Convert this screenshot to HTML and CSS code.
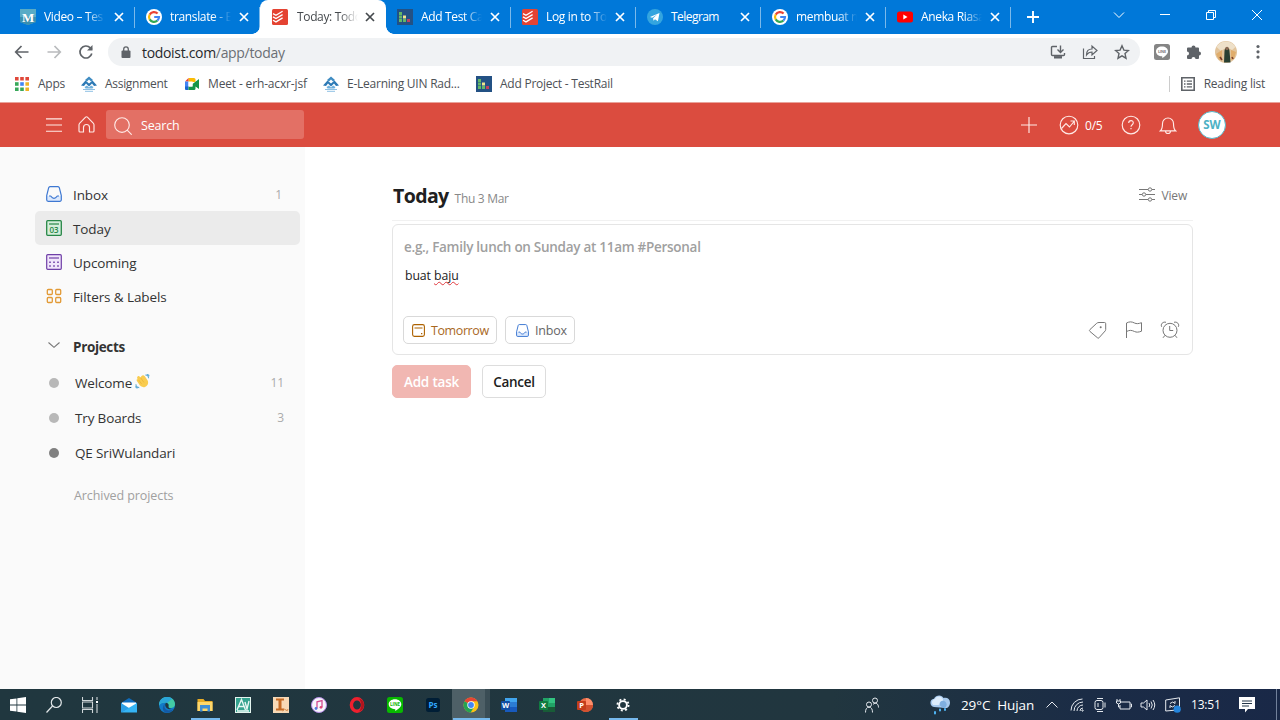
FILE: index.html
```html
<!DOCTYPE html>
<html lang="en">
<head>
<meta charset="utf-8">
<title>Today: Todoist</title>
<link rel="stylesheet" href="styles.css">
</head>
<body>
<svg class="defs" aria-hidden="true">
  <symbol id="google" viewBox="0 0 16 16"><circle cx="8" cy="8" r="8" fill="#fff"/><g fill="none" stroke-width="2.2"><path d="M11.6 4.6A5 5 0 0 0 3.7 5.6" stroke="#ea4335"/><path d="M3.7 5.5a5 5 0 0 0 0 5" stroke="#fbbc05"/><path d="M3.7 10.4a5 5 0 0 0 7.6 1.3" stroke="#34a853"/><path d="M11.3 11.7A5 5 0 0 0 13 8H8.2" stroke="#4285f4"/></g></symbol>
  <symbol id="todoist" viewBox="0 0 16 16"><rect width="16" height="16" rx="1.5" fill="#e44332"/><path d="M1 4.600l3 1.700 6.600-4M1 7.900l3 1.700 6.600-4M1 11.200l3 1.700 6.600-4" fill="none" stroke="#fff" stroke-width="1.300"/></symbol>
  <symbol id="testrail" viewBox="0 0 16 16"><rect width="16" height="16" fill="#235184"/><path d="M2 3h3v3H2zM2 6.500h3v3H2zM2 10h3v3H2zM6 10h3v3H6z" fill="#63b868"/><path d="M6 6.500h3v3H6z" fill="#f0e68c"/><path d="M10 10h3v3h-3z" fill="#c0435e"/></symbol>
  <symbol id="close" viewBox="0 0 10 10"><path d="M1 1l8 8M9 1L1 9" fill="none" stroke="currentColor" stroke-width="1.700"/></symbol>
  <symbol id="uin" viewBox="0 0 16 16"><path d="M8 .5L12 4l-2 1.500L8 3.500l-2 2L4 4z" fill="#3f8cc2"/><path d="M0 9.500L4.500 4.500 8 7.500l3.500-3L16 9.500l-3 .5-2-2.500L8 10.500 5 7.500 3 10z" fill="#2c79b5"/><path d="M3.500 11L6 9.500l2 2 2-2 2.500 1.500-1 1.500h-7z" fill="#6fb0dc"/><path d="M2 13.500h12M4 15.300h8" stroke="#8ec0e4" stroke-width="1"/></symbol>
  <symbol id="inbox" viewBox="0 0 16 16"><path d="M.7 10h4c.5 0 .7 2.300 3.300 2.300S10.800 10 11.300 10h4v5.300H.7z" fill="#dce9fd"/><path d="M4 .7h8a1.500 1.500 0 0 1 1.300 1l2 8v4.100a1.500 1.500 0 0 1-1.500 1.500H2.200a1.500 1.500 0 0 1-1.500-1.500V9.700l2-8A1.500 1.500 0 0 1 4 .7zM3 10h1.700c.5 0 .7 2.300 3.300 2.300S10.800 10 11.300 10H13" fill="none" stroke="currentColor" stroke-width="1.200" stroke-linejoin="round"/></symbol>
</svg>

<div class="tabs">
  <div class="tab"><svg class="fav" viewBox="0 0 16 16"><path d="M0 0h16v13l-8 3-8-3z" fill="#58abc6"/><path d="M0 8h16v5l-8 3-8-3z" fill="#398fb0"/><text x="8" y="12.500" text-anchor="middle" class="favtext">M</text></svg><span class="title">Video – Tes</span><svg class="x"><use href="#close"/></svg></div>
  <div class="tab"><svg class="fav"><use href="#google"/></svg><span class="title">translate - E</span><svg class="x"><use href="#close"/></svg></div>
  <div class="tab active"><svg class="fav"><use href="#todoist"/></svg><span class="title">Today: Todo</span><svg class="x"><use href="#close"/></svg></div>
  <div class="tab"><svg class="fav"><use href="#testrail"/></svg><span class="title">Add Test Ca</span><svg class="x"><use href="#close"/></svg></div>
  <div class="tab"><svg class="fav"><use href="#todoist"/></svg><span class="title">Log in to To</span><svg class="x"><use href="#close"/></svg></div>
  <div class="tab"><svg class="fav" viewBox="0 0 16 16"><circle cx="8" cy="8" r="8" fill="#34a5df"/><path d="M3 7.900l9.500-3.900-1.600 8.300-2.900-2-1.500 1.500-.4-2.600 4-3.600-5 3.100z" fill="#fff"/></svg><span class="title whole">Telegram</span><svg class="x"><use href="#close"/></svg></div>
  <div class="tab"><svg class="fav"><use href="#google"/></svg><span class="title">membuat n</span><svg class="x"><use href="#close"/></svg></div>
  <div class="tab"><svg class="fav" viewBox="0 0 16 16"><rect y="2.500" width="16" height="11" rx="2.500" fill="#f00"/><path d="M6.300 5.500v5L10.500 8z" fill="#fff"/></svg><span class="title">Aneka Riasa</span><svg class="x"><use href="#close"/></svg></div>
  <svg class="plus" viewBox="0 0 12 12"><path d="M6 0v12M0 6h12" stroke="#fff" stroke-width="1.900"/></svg>
  <div class="winctl">
    <svg width="12" height="12" viewBox="0 0 12 12"><path d="M1 3.500l5 5 5-5"/></svg>
    <svg width="12" height="12" viewBox="0 0 12 12"><path d="M1 5.500h10"/></svg>
    <svg width="12" height="12" viewBox="0 0 12 12"><path d="M1.500 3.500h7v7h-7zM3.500 3.500v-2h7v7h-2"/></svg>
    <svg width="12" height="12" viewBox="0 0 12 12"><path d="M1 1l10 10M11 1L1 11"/></svg>
  </div>
</div>

<div class="toolbar">
  <svg class="nav" viewBox="0 0 16 16"><path d="M14.500 8H2M7.500 2L1.700 8l5.800 6"/></svg>
  <svg class="nav off" viewBox="0 0 16 16"><path d="M1.500 8H14M8.500 2l5.800 6-5.800 6"/></svg>
  <svg class="nav" viewBox="0 0 16 16"><path d="M13.800 9.500A6 6 0 1 1 12.300 3.800L14 5.500"/><path d="M14.500 1v5.500H9z" fill="#5f6368" stroke="none"/></svg>
  <div class="address">
    <svg class="lock" viewBox="0 0 10 12"><rect x=".5" y="4.500" width="9" height="7.500" rx="1" fill="#5f6368"/><path d="M2.700 5V3.200a2.300 2.300 0 0 1 4.600 0V5" fill="none" stroke="#5f6368" stroke-width="1.300"/></svg>
    <span class="url">todoist.com<i>/app/today</i></span>
    <svg class="act" viewBox="0 0 16 16"><path d="M7 2.500H2.500a1 1 0 0 0-1 1v7a1 1 0 0 0 1 1h11a1 1 0 0 0 1-1V9M10.500 1.500v6.500M7.500 5.500l3 3 3-3" stroke-width="1.400"/><path d="M4 13.300h8" stroke-width="2.400"/></svg>
    <svg class="act" viewBox="0 0 16 16"><path d="M1.500 4.500v10h11V12M4.500 11c0-4 2-6 5.500-6V2l5 4.500-5 4.500V8c-2.500 0-4 .7-5.500 3z" stroke-width="1.200"/></svg>
    <svg class="act" viewBox="0 0 16 16"><path d="M8 1.800l1.900 4.300 4.600.4-3.500 3.100 1 4.600L8 11.800l-4 2.400 1-4.600-3.500-3.100 4.600-.4z" stroke-width="1.400"/></svg>
  </div>
  <svg class="ext line" viewBox="0 0 16 16"><rect width="16" height="16" rx="2.500" fill="#858585"/><path d="M8 2.500c3.500 0 6 2.100 6 4.900 0 2.500-3 4.800-5.800 6.600v-1.800C4.700 12.200 2 10 2 7.400c0-2.800 2.500-4.900 6-4.900z" fill="#fff"/><text x="8" y="9" text-anchor="middle" class="linetext">LINE</text></svg>
  <svg class="ext" viewBox="0 0 16 16"><path d="M1 4.500A1 1 0 0 1 2 3.500h3.500a2 2 0 1 1 4 0H12a1 1 0 0 1 1 1V7.500a2 2 0 1 1 0 4V14a1 1 0 0 1-1 1H9.500a2 2 0 1 0-4 0H2a1 1 0 0 1-1-1v-2.500a2 2 0 1 0 0-4z" fill="#5f6368"/></svg>
  <svg class="photo" viewBox="0 0 22 22"><circle cx="11" cy="11" r="11" fill="#e2c49c"/><path d="M1.500 6a11 11 0 0 1 19 0L17 9l-5-3-6 4z" fill="#eee0c9"/><path d="M1 13l6-4v10l-3 0zM16 9l5 2-2 7-3 1z" fill="#e0ad6c"/><path d="M9.500 10a2.500 3 0 0 1 5 0l1 11.500H9z" fill="#293f32"/><circle cx="12" cy="7.500" r="1.800" fill="#8a6a55"/><path d="M5 16l2 3M17 16l1 2" stroke="#773e2c" stroke-width="1.600"/></svg>
  <svg class="dots" viewBox="0 0 4 16"><circle cx="2" cy="2.500" r="1.600"/><circle cx="2" cy="7.800" r="1.600"/><circle cx="2" cy="13.100" r="1.600"/></svg>
</div>

<div class="bookmarks">
  <svg class="bm" viewBox="0 0 14 14"><path d="M0 0h3.600v3.600H0zM5.200 0h3.600v3.600H5.200zM10.400 0H14v3.600h-3.600z" fill="#e0483a"/><path d="M0 5.200h3.600v3.600H0z" fill="#39a85a"/><path d="M5.200 5.200h3.600v3.600H5.200z" fill="#4285f4"/><path d="M0 10.400h3.600V14H0zM5.200 10.400h3.600V14H5.200z" fill="#39a85a"/><path d="M10.400 5.200H14v3.600h-3.600zM10.400 10.400H14V14h-3.600z" fill="#f0b326"/></svg><span class="b1">Apps</span>
  <svg class="bm16"><use href="#uin"/></svg><span class="b2">Assignment</span>
  <svg class="bm16" viewBox="0 0 16 16"><path d="M4.500 2H10a1.500 1.500 0 0 1 1.500 1.500V6H4.500z" fill="#fbbc04"/><path d="M4.500 2v3.500H1z" fill="#ea4335"/><path d="M1 5.500h3.500V11H1z" fill="#4285f4"/><path d="M1 10.500h3.500V14H2a1 1 0 0 1-1-1z" fill="#1967d2"/><path d="M4.500 10.500h4V8L15 3v10l-3.500-2.500V12.500A1.500 1.500 0 0 1 10 14H4.500z" fill="#159447"/><path d="M4.500 5.500h4v5h-4z" fill="#fff"/></svg><span class="b3">Meet - erh-acxr-jsf</span>
  <svg class="bm16"><use href="#uin"/></svg><span class="b4">E-Learning UIN Rad...</span>
  <svg class="bm16"><use href="#testrail"/></svg><span class="b5">Add Project - TestRail</span>
  <div class="reading"><svg viewBox="0 0 14 14"><path d="M.8.8h12.400v12.400H.8z" fill="none" stroke="#5f6368" stroke-width="1.600"/><path d="M3 4.200h1.500M5.800 4.200H11M3 7h1.500M5.800 7H11M3 9.800h1.500M5.800 9.800H11" stroke="#5f6368" stroke-width="1.300"/></svg><span>Reading list</span></div>
</div>

<header class="topbar">
  <svg class="burger" viewBox="0 0 16 14"><path d="M0 .8h16M0 7h16M0 13.200h16"/></svg>
  <svg class="home" viewBox="0 0 17 17"><path d="M2 6.800L7.600 1.200a1.300 1.300 0 0 1 1.800 0L15 6.800q1 1 1 2V15a1 1 0 0 1-1 1h-3.500v-4.500a3 3 0 0 0-6 0V16H2a1 1 0 0 1-1-1V8.800q0-1 1-2z"/></svg>
  <div class="search"><svg viewBox="0 0 18 18"><circle cx="8" cy="8" r="7.300"/><path d="M13.200 13.200l4.500 4.500"/></svg><span>Search</span></div>
  <svg class="add" viewBox="0 0 16 16"><path d="M8 0v16M0 8h16"/></svg>
  <svg class="karma" viewBox="0 0 20 20"><circle cx="10" cy="10" r="8.800"/><path d="M2.500 13.500L7 8.500l3.500 3.500L15 6.500M11.500 6H15.300V10"/></svg>
  <span class="score">0/5</span>
  <svg class="help" viewBox="0 0 20 20"><circle cx="10" cy="10" r="8.800"/><path d="M7.700 8c0-3.200 4.600-3.100 4.600-.2 0 1.900-2.300 1.900-2.300 3.900M10 13v1.300"/></svg>
  <svg class="bell" viewBox="0 0 18 20"><path d="M1.500 15.800c1.700-1.500 2-3 2-7.300a5.500 5.500 0 0 1 11 0c0 4.300.3 5.800 2 7.300zM6.500 16a2.500 2.500 0 0 0 5 0"/></svg>
  <div class="avatar">SW</div>
</header>

<main class="app">
  <aside class="side">
    <div class="item"><svg class="blue"><use href="#inbox"/></svg><span>Inbox</span><em>1</em></div>
    <div class="item selected"><svg viewBox="0 0 16 16"><rect x=".7" y=".7" width="14.600" height="14.600" rx="1" fill="#d5eedb" stroke="#278747" stroke-width="1.300"/><path d="M3 4h10" stroke="#278747" stroke-width="1.200"/><text x="8" y="13" text-anchor="middle" class="date">03</text></svg><span>Today</span></div>
    <div class="item"><svg viewBox="0 0 16 16"><rect x=".7" y=".7" width="14.600" height="14.600" rx="1" fill="#f1e5fb" stroke="#6f3fa7" stroke-width="1.200"/><path d="M3 4h10" stroke="#6f3fa7" stroke-width="1.200"/><path d="M3.200 8.200h10M3.200 12h10" stroke="#6f3fa7" stroke-width="1.600" stroke-dasharray="1.600 2.400"/></svg><span>Upcoming</span></div>
    <div class="item"><svg viewBox="0 0 16 16" fill="none" stroke="#e29a36" stroke-width="1.300"><rect x="1.300" y="1.500" width="5" height="5" rx="1"/><rect x="9.700" y="1.500" width="5" height="5" rx="1"/><rect x="1.300" y="9.500" width="5" height="5" rx="1"/><rect x="9.700" y="9.500" width="5" height="5" rx="1"/></svg><span>Filters &amp; Labels</span></div>
    <div class="heading"><svg viewBox="0 0 12 6"><path d="M.5.5L6 5.300 11.500.5" fill="none" stroke="#777" stroke-width="1.100"/></svg><span>Projects</span></div>
    <div class="project"><b class="dot"></b><span>Welcome</span><svg class="wave" viewBox="0 0 16 16"><path d="M3 2.500c1-1 2 .3 3 1.300C6.500 1.500 9 0 10.500 2.500l3 4.500c1.500 3-.5 6.500-3.500 7-2.500.4-4.500-1-6-3.500L2 7.500C1.300 6 2 5.500 3 5.800 2 4.500 2 3.500 3 2.500z" fill="#f9cc4f"/><path d="M6 4l3.500 5M4 6.500L7 10.500" stroke="#e8ad36" stroke-width=".7"/><path d="M11 1c2.500 0 3.500 1 3.500 3.500M12.500.5c2 0 2.500.5 2.500 2M1 11c0 2.500 1 3.500 3.500 3.500M.7 13c0 1.500.7 2 2 2" fill="none" stroke="#67aed6" stroke-width="1.200"/></svg><em>11</em></div>
    <div class="project"><b class="dot"></b><span>Try Boards</span><em>3</em></div>
    <div class="project"><b class="dot dark"></b><span>QE SriWulandari</span></div>
    <div class="archived">Archived projects</div>
  </aside>
  <section class="content">
    <div class="head"><h1>Today</h1><small>Thu 3 Mar</small><div class="view"><svg viewBox="0 0 16 15"><path d="M0 2.500h9M13 2.500h3M0 7.500h3M7 7.500h9M0 12.500h9M13 12.500h3"/><circle cx="11" cy="2.500" r="1.700"/><circle cx="5" cy="7.500" r="1.700"/><circle cx="11" cy="12.500" r="1.700"/></svg><span>View</span></div></div>
    <div class="editor">
      <div class="ph">e.g., Family lunch on Sunday at 11am #Personal</div>
      <div class="desc">buat <u>baju</u></div>
      <div class="chips">
        <div class="chip tomorrow"><svg viewBox="0 0 13 13"><rect x=".6" y=".6" width="11.800" height="11.800" rx="1.800" fill="none" stroke="#ad6200" stroke-width="1.100"/><path d="M2.500 4h8" stroke="#ad6200"/><path d="M9 9h1.300v1.300H9z" fill="#ad6200"/></svg><span>Tomorrow</span></div>
        <div class="chip inboxchip"><svg class="blue"><use href="#inbox"/></svg><span>Inbox</span></div>
        <div class="tools">
          <svg viewBox="0 0 20 20"><path d="M11 2.500h5.500a1.200 1.200 0 0 1 1.200 1.200V9.500q0 .8-.6 1.500L11 17.800a1 1 0 0 1-1.500 0L2 11.500a1.300 1.300 0 0 1 0-2l6.700-6.200q.8-.8 2.300-.8z"/><circle cx="12.700" cy="7.300" r="1" fill="#777" stroke="none"/></svg>
          <svg viewBox="0 0 20 20"><path d="M2.500 18V3c3-1.500 5-1.500 8 0 2 1 4 .8 7-.3v8.500c-3 1.100-5 1.300-7 .3-3-1.500-5-1.500-8 0"/></svg>
          <svg viewBox="0 0 20 20"><circle cx="10" cy="10.300" r="7"/><path d="M9.700 6v4.500h3.500M5 15.300l-2 2.500M15 15.300l2 2.500M1.700 6.800C.2 4.200 3 1.300 6 2.300M18.300 6.800C19.800 4.200 17 1.300 14 2.300"/></svg>
        </div>
      </div>
    </div>
    <div class="buttons"><div class="btn primary">Add task</div><div class="btn">Cancel</div></div>
  </section>
</main>

<footer class="taskbar">
  <div class="cell s"><svg viewBox="0 0 16 16"><path d="M0 2.300l6.500-.9v6.200H0zM7.300 1.300L16 0v7.600H7.300zM0 8.400h6.500v6.200L0 13.700zM7.300 8.400H16V16l-8.700-1.300z" fill="#fff"/></svg></div>
  <div class="cell s"><svg viewBox="0 0 16 16" fill="none" stroke="#e3e8ea" stroke-width="1.200"><circle cx="10.300" cy="5.500" r="5"/><path d="M6.500 9L.5 15.500"/></svg></div>
  <div class="cell s last"><svg viewBox="0 0 16 16"><path d="M.5 0v3.500h10V0M.5 16v-3.500h10V16M.5 5v6h10V5zM15 0v3M15 7v9" fill="none" stroke="#cfd6d8" stroke-width="1.100"/><path d="M14 4h2v2h-2z" fill="#fff"/></svg></div>
  <div class="cell"><svg viewBox="0 0 16 16"><path d="M0 6l8-5 8 5v9H0z" fill="#0f6cbd"/><path d="M1 5.500h14V11H1z" fill="#fff"/><path d="M0 6l8 5-8 4.500z" fill="#2d9fe5"/><path d="M16 6l-16 9.500h16z" fill="#35b4f4"/></svg></div>
  <div class="cell"><svg viewBox="0 0 16 16"><circle cx="8" cy="8" r="8" fill="#117bc8"/><path d="M.2 6.500C1 2.500 4 0 8 0c5 0 8 3.500 8 7 0 3-2 4-4.500 4-2 0-2.500-1-2-2 .8-2-1-3.500-3.500-3.500-3 0-5 1-5.800 3z" fill="#43cba4"/><path d="M.2 6.500C1 2.500 4 0 8 0c2 0 4 .6 5.300 1.800L8 6q-1-.6-2-.5c-3 0-5 1-5.800 3z" fill="#2aa5d8"/><path d="M6 6.500c-2 4 1 7.500 5 6.800 1.500-.2 2.500-.8 3.500-1.500C13 15 10 16 7.500 15.800 3 15 3 9 6 6.500z" fill="#1459a4"/><path d="M9.500 9c.5-1.500-.5-3-2.500-3.300C5 8 7 12 11 12.300l3-.8c-2.500.5-5 0-4.500-2.500z" fill="#203740"/></svg></div>
  <div class="cell run"><svg viewBox="0 0 16 16"><path d="M.5 2h6l1.500 2h7.500v10H.5z" fill="#e8ac26"/><path d="M.5 5h15v9H.5z" fill="#fed76b"/><path d="M3 8h10v6.500h-2.500v-3h-5v3H3z" fill="#3f8ed5"/></svg></div>
  <div class="cell"><svg viewBox="0 0 16 16"><path d="M0 0h16v16H0z" fill="#e4f4ef"/><path d="M1 1h14v14H1z" fill="#34a38f"/><path d="M2 13L6.500 2.500l4 10.500M3.500 9.500h6M10 5l2 7 2-8M2 14h12" fill="none" stroke="#e8f7f4" stroke-width="1.400"/></svg></div>
  <div class="cell"><svg viewBox="0 0 16 16"><path d="M0 0h16v16H0z" fill="#f8d9b5"/><path d="M3 1.500h8v2H8.500v8H11v2H3v-2h2.500v-8H3z" fill="#c66b24"/><path d="M9.500 14q2-3 3.500-1t2-1" fill="none" stroke="#d58a48"/></svg></div>
  <div class="cell"><svg viewBox="0 0 16 16"><circle cx="8" cy="8" r="7.500" fill="#f7f6fc" stroke="#b98fe8"/><path d="M6 11.500V4.800l5-1.200v6.500" fill="none" stroke="#d44b91" stroke-width="1.300"/><circle cx="5" cy="11.500" r="1.400" fill="#5379dc"/><circle cx="10" cy="10.300" r="1.400" fill="#e14775"/></svg></div>
  <div class="cell"><svg viewBox="0 0 16 16"><ellipse cx="8" cy="8" rx="5.600" ry="6.200" fill="none" stroke="#ef202e" stroke-width="3.400"/><path d="M10 1.500c3 1 5 3 5 6.500s-2 5.500-5 6.500c3-4 3-9 0-13z" fill="#ad151d"/></svg></div>
  <div class="cell"><svg viewBox="0 0 16 16"><rect width="16" height="16" rx="2.500" fill="#08b900"/><path d="M8 2.300c3.600 0 6.300 2.200 6.300 5 0 2.700-3 4.900-6 6.700v-1.800c-3.800-.2-6.600-2.200-6.600-4.900 0-2.800 2.700-5 6.300-5z" fill="#fff"/><text x="8" y="9" text-anchor="middle" class="linetext green">LINE</text></svg></div>
  <div class="cell"><svg viewBox="0 0 16 16"><rect x="1" y="1" width="14" height="14" rx="2.500" fill="#001e36"/><text x="8" y="10.700" text-anchor="middle" class="ps">Ps</text></svg></div>
  <div class="cell chrome"><svg viewBox="0 0 16 16"><circle cx="8" cy="8" r="7.500" fill="#fbc116"/><path d="M8 8L1.500 4.200A7.500 7.500 0 0 1 14.500 4.300H8z" fill="#e74435"/><path d="M8 8L1.500 4.200A7.500 7.500 0 0 0 7.700 15.500L11 10z" fill="#24a353"/><circle cx="8" cy="8" r="3.700" fill="#fff"/><circle cx="8" cy="8" r="2.900" fill="#4285f4"/></svg></div>
  <div class="cell"><svg viewBox="0 0 16 16"><path d="M4 1h12v14H4z" fill="#2b7cd3"/><path d="M4 1h12v4H4z" fill="#41a5ee"/><path d="M4 10h12v5H4z" fill="#185abd"/><rect y="4" width="9" height="9" rx="1" fill="#114ea4"/><text x="4.500" y="11" text-anchor="middle" class="office">W</text></svg></div>
  <div class="cell"><svg viewBox="0 0 16 16"><path d="M4 1h12v14H4z" fill="#21a366"/><path d="M10 1h6v5h-6z" fill="#33c481"/><path d="M4 10h12v5H4z" fill="#185c37"/><rect y="4" width="9" height="9" rx="1" fill="#107c41"/><text x="4.500" y="11" text-anchor="middle" class="office">X</text></svg></div>
  <div class="cell"><svg viewBox="0 0 16 16"><circle cx="9" cy="8" r="7" fill="#ed6c47"/><path d="M9 1a7 7 0 0 1 7 7H9z" fill="#ff8f6b"/><path d="M3 11.500A7 7 0 0 0 16 8H9z" fill="#d35230"/><rect y="4" width="9" height="9" rx="1" fill="#c43e1c"/><text x="4.500" y="11" text-anchor="middle" class="office">P</text></svg></div>
  <div class="cell run"><svg viewBox="0 0 16 16"><circle cx="8" cy="8" r="3.900" fill="none" stroke="#fff" stroke-width="1.900"/><circle cx="8" cy="8" r="5.600" fill="none" stroke="#fff" stroke-width="1.800" stroke-dasharray="2 2.398"/></svg></div>
  <div class="tray">
    <svg class="people" viewBox="0 0 16 16"><circle cx="5" cy="7.500" r="2.500"/><path d="M1.500 15.500c0-3.200 1-5.300 3.500-5.300s3.500 2 3.500 5.300"/><circle cx="11" cy="3.500" r="2.500"/><path d="M9 7.300c3-2.300 5.500-.5 5.500 3.200"/></svg>
    <svg class="rain" viewBox="0 0 22 20"><path d="M5 12a4.200 4.200 0 0 1 0-8.300C7-.5 13-.5 14.500 3 18 2 21 4 21 7.500S19 13 17 13z" fill="#a7c9ed"/><path d="M4 10a3.500 3.500 0 0 1 2-6c2-3.500 7-3 8 .5 1 3-2 5-5 5.500z" fill="#dcecfb"/><path d="M11 10.500c-2-4 4-6.500 6-3s-1 5.500-3 5.500z" fill="#7fafe0"/><path d="M6 17v1.500M11 14.500v1M16 14v1" stroke="#4fb4f3" stroke-width="2" stroke-linecap="round"/></svg>
    <span class="temp">29°C&nbsp; Hujan</span>
    <svg class="up" viewBox="0 0 12 12"><path d="M.5 8.500L6 3l5.500 5.500"/></svg>
    <svg class="wifi" viewBox="0 0 14 14"><path d="M1 12.500A11.500 11.500 0 0 1 12.500 1M4 13A9 9 0 0 1 13 4M7 13A6 6 0 0 1 13 7M10 13a3 3 0 0 1 3-3"/><circle cx="12.500" cy="12.500" r=".7"/></svg>
    <svg class="cam" viewBox="0 0 14 14"><rect x="2" y="2.500" width="8" height="9" rx="2"/><path d="M4 .5h6M4 13.500h6M12 4.500v5M5 5v4"/></svg>
    <svg class="bat" viewBox="0 0 16 14"><path d="M5 4h9v7H4V7M14.500 6h1v3h-1M1 1v2M4 1v2M.5 3h4v2q-2 2-4 0zM2.500 6v3H4"/></svg>
    <svg class="spk" viewBox="0 0 16 14"><path d="M1 5h2.500L7 2v10L3.500 9H1zM9 5q1.500 2 0 4M11 3.500q2.500 3.500 0 7M13 2q3.500 5 0 10"/></svg>
    <svg class="sync" viewBox="0 0 16 16"><path d="M.7 3L14.500.8v12L.7 14zM5 6.500q3-3 5 0V4M10 8.500q-3 3-5 0V11"/><circle cx="12.200" cy="12.200" r="3.600" fill="#2485dd" stroke="none"/></svg>
    <span class="clock">13:51</span>
    <svg class="note" viewBox="0 0 16 16"><path d="M0 0h16v12H9l-3 3.500V12H0z" fill="#fff" stroke="none"/><path d="M3 4h10M3 6.500h10M3 9h7" stroke="#243649"/></svg>
  </div>
</footer>
</body>
</html>
```

FILE: styles.css
```css
* { box-sizing: border-box; }
body { margin: 0; width: 1280px; height: 720px; overflow: hidden; display: flex; flex-direction: column; background: #fff; color: #333; font-family: "Open Sans", "Noto Sans", sans-serif; font-size: 13.500px; letter-spacing: -.1px; }
svg { display: block; flex: none; }
span { white-space: nowrap; }
.defs { position: absolute; width: 0; height: 0; }

/* browser tabs */
.tabs { height: 34px; flex: none; display: flex; background: #0078d9; padding-left: 10px; }
.tab { width: 125px; height: 34px; flex: none; display: flex; align-items: center; padding-left: 11px; color: #fff; border-right: 1px solid #66aee8; border-image: linear-gradient(transparent 23%, #7bb9ea 23%, #7bb9ea 80%, transparent 80%) 1; }
.tab:first-child { padding-left: 10px; }
.tab:first-child .x { margin-left: 9px; }
.fav { width: 16px; height: 16px; }
.title { width: 61px; margin-left: 8px; font-size: 12px; letter-spacing: -.35px; line-height: 20px; mask-image: linear-gradient(90deg, #000 70%, transparent); }
.title.whole { mask-image: none; letter-spacing: -.55px; }
.x { width: 10px; height: 10px; margin-left: 8px; }
.active { position: relative; background: #fff; color: #45494d; border: 0; border-radius: 8px 8px 0 0; width: 126px; padding-left: 12px; }
.active::before, .active::after { content: ""; position: absolute; bottom: 0; width: 8px; height: 8px; }
.active::before { left: -8px; background: radial-gradient(circle at 0 0, transparent 7.500px, #fff 8px); }
.active::after { right: -8px; background: radial-gradient(circle at 100% 0, transparent 7.500px, #fff 8px); }
.active .title { margin-left: 9px; }
.active .x { margin-left: 7px; }
.plus { width: 12px; height: 12px; margin: 11px 0 0 16px; }
.winctl { margin: 9px 17px 0 auto; display: flex; gap: 34px; fill: none; stroke: #fff; stroke-width: 1; }
.favtext { font: bold 13px "Liberation Serif", serif; fill: #fff; }

/* navigation */
.toolbar { height: 36px; flex: none; display: flex; align-items: center; padding-left: 14px; }
.nav { width: 16px; height: 16px; margin-right: 16px; fill: none; stroke: #5f6368; stroke-width: 1.700; }
.nav.off { stroke: #b9bbbd; }
.address { width: 1032px; height: 28px; margin-left: -2px; border-radius: 14px; background: #f0f2f4; display: flex; align-items: center; padding-left: 13px; }
.lock { width: 10px; height: 12px; }
.url { font-size: 14px; letter-spacing: -.32px; color: #27292c; margin: 0 auto 0 11px; }
.url i { font-style: normal; color: #6b6f74; }
.act { width: 16px; height: 16px; margin-right: 16px; fill: none; stroke: #5f6368; }
.act:last-child { margin-right: 10px; }
.ext { width: 16px; height: 16px; margin-left: 16px; }
.ext.line { margin-left: 14px; }
.linetext { font: bold 3.800px "Open Sans", sans-serif; fill: #777; }
.linetext.green { fill: #08b900; font-size: 4.500px; }
.photo { width: 22px; height: 22px; margin-left: 13px; }
.dots { width: 4px; height: 16px; margin-left: 19px; fill: #5f6368; }

.bookmarks { height: 33px; flex: none; display: flex; align-items: center; padding: 0 15px 5px 15px; font-size: 12px; letter-spacing: -.24px; color: #4d5156; border-bottom: 1px solid #e9a39b; }
.bm { width: 14px; height: 14px; }
.bm16 { width: 16px; height: 16px; }
.bookmarks span { margin-left: 8px; }
.bookmarks .b1 { width: 43px; margin-left: 9px; }
.bookmarks .b2 { width: 79px; letter-spacing: -.3px; }
.bookmarks .b3 { width: 115px; letter-spacing: -.15px; }
.bookmarks .b4 { width: 129px; }
.reading { margin-left: auto; border-left: 1px solid #ccc; height: 16px; display: flex; align-items: center; padding-left: 11px; }
.reading svg { width: 14px; height: 14px; }
.bookmarks .reading span { margin-left: 9px; }

/* app header */
.topbar { height: 44px; flex: none; display: flex; align-items: center; background: #db4c3f; color: #fff; padding: 0 54px 0 46px; }
.topbar svg { fill: none; stroke: #ffe9e6; stroke-width: 1.150; }
.burger { width: 16px; height: 14px; margin-bottom: 1px; }
.home { width: 17px; height: 17px; margin: 0 0 2px 16px; }
.search { width: 198px; height: 29px; margin: 0 0 1px 11px; border-radius: 3px; background: #e37065; display: flex; align-items: center; padding-left: 8px; }
.search svg { width: 18px; height: 18px; margin-top: 2px; }
.search span { margin-left: 9px; padding-top: 1px; font-size: 12.500px; letter-spacing: -.2px; }
.add { width: 16px; height: 16px; margin-left: auto; }
.karma { width: 20px; height: 20px; margin-left: 22px; }
.score { margin-left: 6px; width: 19px; font-size: 12px; letter-spacing: -.2px; }
.help { width: 20px; height: 20px; margin-left: 17px; }
.bell { width: 18px; height: 20px; margin-left: 18px; }
.avatar { width: 28px; height: 28px; margin-left: 21px; border-radius: 50%; border: 1.500px solid #56b7c9; background: #fff; color: #4db1c4; font-weight: 700; font-size: 11.500px; text-align: center; line-height: 26px; }

/* sidebar */
.app { flex: 1; display: flex; min-height: 0; }
.side { width: 305px; background: #fafafa; padding: 30px 5px 0 35px; }
.item { height: 34px; display: flex; align-items: center; border-radius: 5px; padding: 0 18px 0 11px; }
.item svg { width: 16px; height: 16px; margin-bottom: 1px; }
.item span { margin-left: 11px; padding-top: 1px; }
.item em { margin-left: auto; }
.side em { font-style: normal; font-size: 12px; color: #aaa; }
.selected { background: #ebebeb; }
.blue { color: #3e78d2; }
.date { font: 600 8px "Open Sans", sans-serif; fill: #278747; }
.heading { height: 34px; margin-top: 17px; display: flex; align-items: center; padding-left: 13px; font-weight: 700; }
.heading svg { width: 12px; height: 6px; margin-bottom: 4px; }
.heading span { margin-left: 13px; letter-spacing: -.35px; }
.project { height: 35px; display: flex; align-items: center; padding: 0 16px 0 14px; }
.heading + .project { margin-top: 1px; }
.dot { width: 10px; height: 10px; border-radius: 50%; background: #b8b8b8; }
.dot.dark { background: #808080; }
.project span { margin-left: 16px; letter-spacing: -.15px; }
.project em { margin-left: auto; }
.wave { width: 15px; height: 15px; margin: 0 0 3px 3px; }
.archived { margin: 16px 0 0 39px; font-size: 12.500px; letter-spacing: -.08px; line-height: 20px; color: #a0a0a0; }

/* task editor */
.content { width: 801px; margin-left: 87px; padding-top: 27px; }
.head { height: 47px; display: flex; align-items: baseline; border-bottom: 1px solid #f1f1f1; }
h1 { margin: 7px 0 0 1px; font-size: 19.500px; line-height: 30px; letter-spacing: -.6px; color: #202020; }
small { margin-left: 6px; font-size: 12px; letter-spacing: -.3px; color: #888; }
.view { margin-left: auto; padding-right: 6px; display: flex; align-items: center; font-size: 12px; letter-spacing: -.2px; color: #777; margin-bottom: 5px; align-self: center; }
.view svg { width: 16px; height: 15px; margin-right: 7px; fill: none; stroke: #777; }
.view span { padding-top: 1px; }
.editor { height: 131px; margin-top: 3px; border: 1px solid #e5e5e5; border-radius: 6px; padding: 12px 10px 0; }
.ph { margin-left: 1px; font-size: 13.500px; font-weight: 550; letter-spacing: -.28px; color: #a0a0a0; line-height: 20px; }
.desc { margin: 9px 0 0 2px; font-size: 12.300px; line-height: 19px; color: #222; }
.desc u { text-decoration: underline wavy #e0393e 1px; text-underline-offset: 1px; text-decoration-skip-ink: none; }
.chips { margin-top: 31px; display: flex; align-items: center; }
.chip { height: 28px; border: 1px solid #d9d9d9; border-radius: 5px; display: flex; align-items: center; font-size: 12.500px; letter-spacing: -.2px; color: #666; }
.chip svg { width: 13px; height: 13px; margin-right: 6px; }
.tomorrow { width: 94px; padding-left: 8px; color: #a9681e; letter-spacing: -.4px; }
.inboxchip { width: 70px; margin-left: 8px; padding-left: 10px; }
.tools { margin-left: auto; display: flex; gap: 16px; padding-right: 2px; fill: none; stroke: #777; stroke-width: 1; }
.tools svg { width: 20px; height: 20px; }
.buttons { margin-top: 10px; display: flex; gap: 12px; }
.btn { width: 64px; height: 33px; border: 1px solid #ddd; border-radius: 5px; display: flex; align-items: center; justify-content: center; font-size: 13.500px; font-weight: 600; letter-spacing: -.3px; color: #202020; }
.primary { width: 79px; margin-right: -1px; background: #f1b7b2; border-color: #f1b7b2; color: #fff; letter-spacing: -.2px; }

/* desktop taskbar */
.taskbar { height: 31px; flex: none; display: flex; background: linear-gradient(90deg, #20373f, #21363f 65%, #1b2c46 85%, #192847); }
.cell { width: 38px; height: 31px; display: flex; align-items: center; justify-content: center; flex: none; }
.cell svg { width: 16px; height: 16px; }
.cell.s { width: 36px; }
.cell.last { margin-right: 2px; }
.run { background: linear-gradient(#76b9ed, #76b9ed) center bottom / 29px 2px no-repeat; }
.chrome { background: linear-gradient(#76b9ed, #76b9ed) center bottom / 37px 2px no-repeat, linear-gradient(90deg, #4e6067 86%, #3a4d55 86%); }
.ps { font: bold 8px "Open Sans", sans-serif; fill: #31a8ff; }
.office { font: bold 7.500px "Open Sans", sans-serif; fill: #fff; }
.tray { margin-left: auto; display: flex; align-items: center; color: #fff; width: 416px; border-right: 1px solid #71809a; margin-right: 3px; fill: none; stroke: #e5e9ee; stroke-width: 1; }
.tray span { stroke: none; }
.people { width: 16px; height: 16px; margin-left: 3px; }
.rain { width: 22px; height: 20px; margin-left: 49px; stroke: none; }
.temp { width: 75px; margin-left: 10px; font-size: 13.500px; letter-spacing: -.1px; }
.up { width: 12px; height: 12px; margin-left: 10px; }
.wifi { width: 14px; height: 14px; margin-left: 12px; }
.cam { width: 14px; height: 14px; margin-left: 9px; }
.bat { width: 16px; height: 14px; margin-left: 9px; }
.spk { width: 16px; height: 14px; margin-left: 8px; }
.sync { width: 16px; height: 16px; margin-left: 9px; }
.clock { width: 30px; margin-left: 10px; font-size: 12px; letter-spacing: -.2px; }
.note { width: 16px; height: 16px; margin-left: 18px; }
```
